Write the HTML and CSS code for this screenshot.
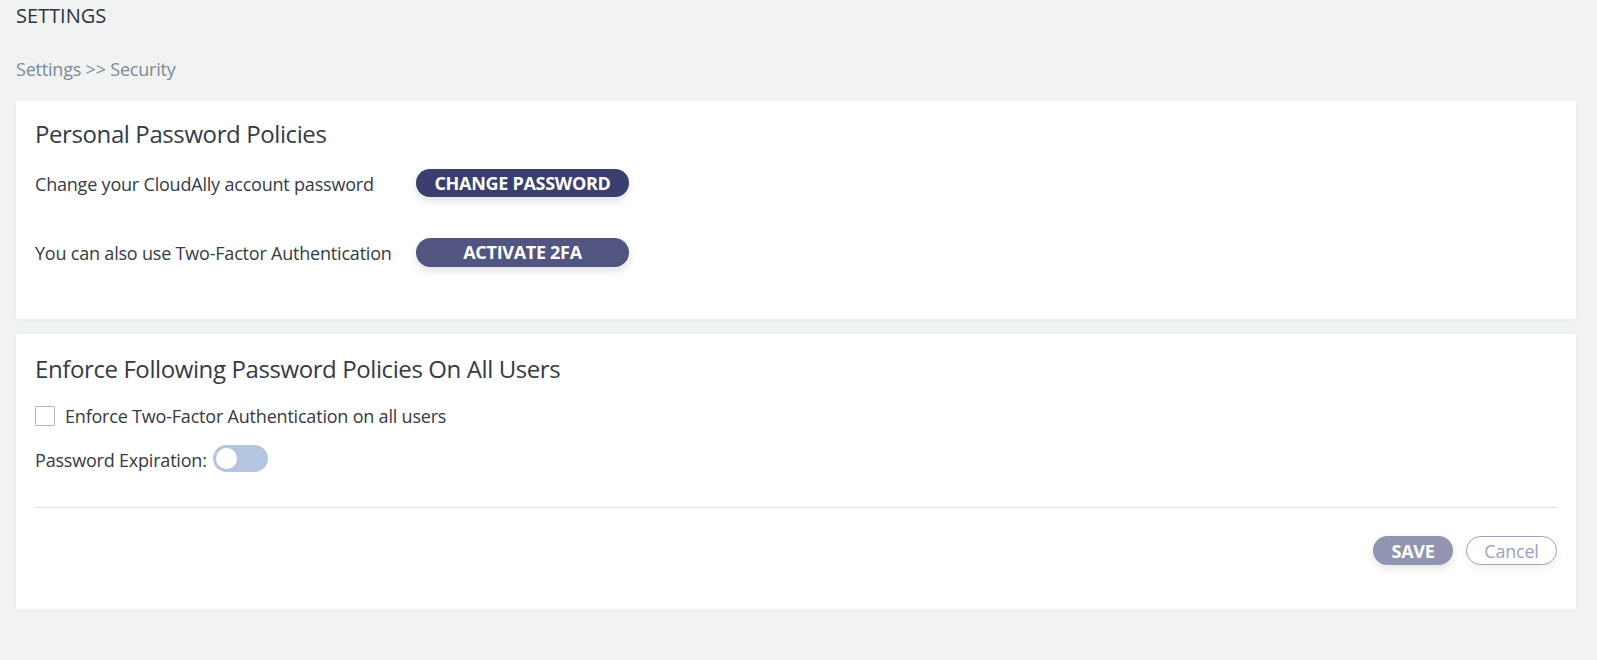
FILE: index.html
```html
<!DOCTYPE html>
<html>
<head>
<meta charset="utf-8">
<link rel="stylesheet" href="styles.css">
</head>
<body>
<div class="page">
  <div class="page-title">SETTINGS</div>
  <div class="breadcrumb">Settings &gt;&gt; Security</div>

  <section class="card card-personal">
    <h2 class="card-title">Personal Password Policies</h2>
    <div class="row row-first">
      <span class="label">Change your CloudAlly account password</span>
      <button class="btn btn-dark">CHANGE PASSWORD</button>
    </div>
    <div class="row row-second">
      <span class="label">You can also use Two-Factor Authentication</span>
      <button class="btn btn-mid">ACTIVATE 2FA</button>
    </div>
  </section>

  <section class="card card-enforce">
    <h2 class="card-title">Enforce Following Password Policies On All Users</h2>
    <label class="check-row">
      <span class="checkbox"></span>
      <span class="text">Enforce Two-Factor Authentication on all users</span>
    </label>
    <div class="toggle-row">
      <span class="text">Password Expiration:</span>
      <span class="toggle"><span class="knob"></span></span>
    </div>
    <div class="divider"></div>
    <div class="actions">
      <button class="btn btn-save">SAVE</button>
      <button class="btn-cancel">Cancel</button>
    </div>
  </section>
</div>
</body>
</html>
```

FILE: styles.css
```css
* { box-sizing: border-box; }
html, body { margin: 0; padding: 0; }
body {
  background: #f1f2f2;
  font-family: "Open Sans", "Liberation Sans", sans-serif;
  color: #343a45;
  font-size: 18px;
  letter-spacing: -0.2px;
}
.page {
  padding: 2px 21px 0 16px;
}
.page-title {
  font-size: 20px;
  line-height: 28px;
  letter-spacing: 0;
  color: #2f3540;
}
.breadcrumb {
  margin-top: 27px;
  line-height: 24px;
  color: #7b8b9c;
}
.card {
  background: #fff;
  box-shadow: 0 1px 4px rgba(0,0,0,0.05);
  padding: 0 19px;
}
.card-personal {
  margin-top: 19px;
  height: 219px;
  padding-top: 18px;
}
.card-enforce {
  margin-top: 15px;
  height: 275px;
  padding-top: 19px;
}
.card-title {
  margin: 0;
  font-size: 24px;
  font-weight: 400;
  line-height: 32px;
  letter-spacing: -0.4px;
  color: #343b46;
}
.row {
  display: flex;
  align-items: center;
  height: 28px;
}
.row-first { margin-top: 19px; }
.row-second { margin-top: 41px; }
.label {
  width: 381px;
  flex: none;
  line-height: 24px;
  padding-top: 1px;
  color: #343b46;
}
.btn {
  border: none;
  border-radius: 14px;
  height: 28px;
  width: 213px;
  color: #fff;
  font-family: "Open Sans", "Liberation Sans", sans-serif;
  font-weight: 700;
  font-size: 18px;
  letter-spacing: -0.3px;
  line-height: 24px;
  padding: 0;
  box-shadow: 0 4px 8px rgba(0,0,0,0.12);
}
.btn-dark { background: #3b3f6f; }
.btn-mid { background: #52557f; height: 29px; border-radius: 15px; }
.check-row {
  display: flex;
  align-items: center;
  margin-top: 19px;
  height: 24px;
  gap: 10px;
}
.text { line-height: 24px; }
.checkbox {
  width: 20px;
  height: 20px;
  border: 1px solid #b3b8c2;
  border-radius: 1px;
  background: #fff;
  flex: none;
}
.toggle-row {
  display: flex;
  align-items: center;
  margin-top: 17px;
  height: 27px;
  gap: 6px;
}
.toggle-row .text { padding-top: 2px; }
.toggle {
  width: 55px;
  height: 27px;
  border-radius: 14px;
  background: #b4c5e0;
  padding: 3px;
  display: flex;
}
.knob {
  width: 21px;
  height: 21px;
  border-radius: 50%;
  background: #fff;
}
.divider {
  margin-top: 35px;
  height: 1px;
  background: #dcdfe6;
}
.actions {
  display: flex;
  justify-content: flex-end;
  gap: 13px;
  margin-top: 28px;
}
.btn-save {
  width: 80px;
  height: 29px;
  border-radius: 15px;
  background: #9295b1;
  box-shadow: 0 4px 8px rgba(0,0,0,0.10);
}
.btn-cancel {
  width: 91px;
  height: 29px;
  border-radius: 15px;
  border: 1px solid #9ea1bf;
  background: #fff;
  color: #9ea1bf;
  font-family: "Open Sans", "Liberation Sans", sans-serif;
  font-size: 18px;
  letter-spacing: -0.2px;
  line-height: 24px;
  padding: 0;
  box-shadow: 0 4px 8px rgba(0,0,0,0.06);
}
```
